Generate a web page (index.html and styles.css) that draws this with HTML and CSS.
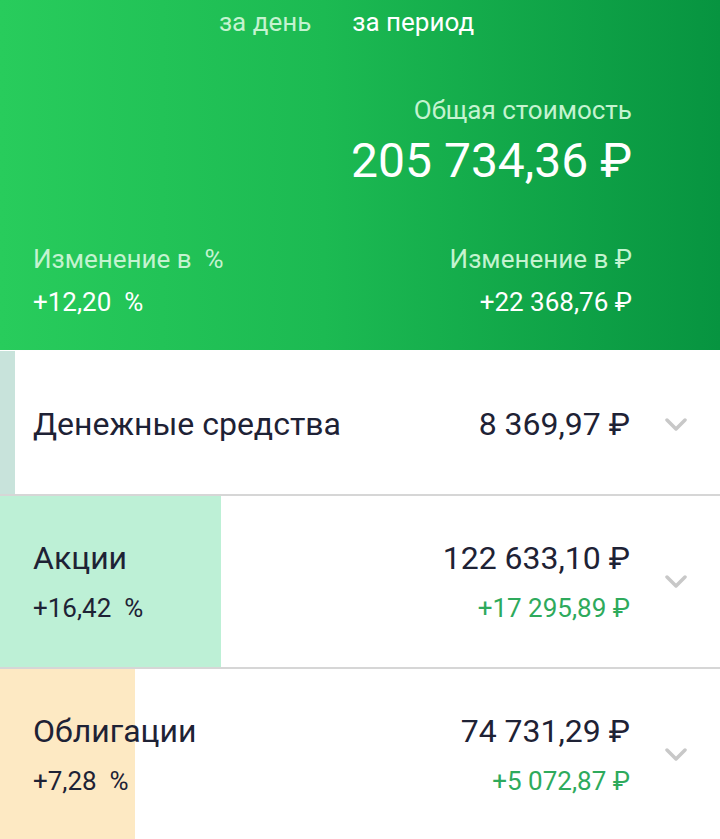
FILE: index.html
```html
<!DOCTYPE html>
<html lang="ru">
<head>
    <meta charset="UTF-8">
    <meta name="viewport" content="width=device-width, initial-scale=1.0">
    <title>Портфель</title>
    <link rel="stylesheet" href="styles.css">
</head>
<body>
    <!-- Шапка с общей стоимостью -->
    <div class="header">
        <div class="tabs">
            <span class="tab">за день</span>
            <span class="tab active">за период</span>
        </div>
        <div class="total">
            <div class="label">Общая стоимость</div>
            <div class="total-value">205 734,36 ₽</div>
        </div>
        <div class="changes">
            <div class="change">
                <div class="label">Изменение в&nbsp; %</div>
                <div class="change-value">+12,20&nbsp; %</div>
            </div>
            <div class="change right">
                <div class="label">Изменение в ₽</div>
                <div class="change-value">+22 368,76 ₽</div>
            </div>
        </div>
    </div>

    <!-- Состав портфеля -->
    <div class="assets">
        <div class="asset cash" style="--w: 15px">
            <div class="asset-left">
                <div class="asset-name">Денежные средства</div>
            </div>
            <div class="asset-right">
                <div class="asset-sum">8 369,97 ₽</div>
            </div>
            <svg class="chevron" width="22" height="13" viewBox="0 0 22 13"><polyline points="2,2 11,11 20,2" fill="none" stroke="#c8c8c8" stroke-width="3.5" stroke-linecap="round" stroke-linejoin="round"/></svg>
        </div>

        <div class="asset stocks" style="--w: 221px">
            <div class="asset-left">
                <div class="asset-name">Акции</div>
                <div class="asset-pct">+16,42&nbsp; %</div>
            </div>
            <div class="asset-right">
                <div class="asset-sum">122 633,10 ₽</div>
                <div class="asset-diff">+17 295,89 ₽</div>
            </div>
            <svg class="chevron" width="22" height="13" viewBox="0 0 22 13"><polyline points="2,2 11,11 20,2" fill="none" stroke="#c8c8c8" stroke-width="3.5" stroke-linecap="round" stroke-linejoin="round"/></svg>
        </div>

        <div class="asset bonds" style="--w: 135px">
            <div class="asset-left">
                <div class="asset-name">Облигации</div>
                <div class="asset-pct">+7,28&nbsp; %</div>
            </div>
            <div class="asset-right">
                <div class="asset-sum">74 731,29 ₽</div>
                <div class="asset-diff">+5 072,87 ₽</div>
            </div>
            <svg class="chevron" width="22" height="13" viewBox="0 0 22 13"><polyline points="2,2 11,11 20,2" fill="none" stroke="#c8c8c8" stroke-width="3.5" stroke-linecap="round" stroke-linejoin="round"/></svg>
        </div>
    </div>
</body>
</html>
```

FILE: styles.css
```css
body {
    margin: 0;
    font-family: Roboto, "Noto Sans", "DejaVu Sans", sans-serif;
    background-color: #ffffff;
    color: #1e2235;
}
.header {
    height: 350px;
    box-sizing: border-box;
    padding: 6px 88px 0 33px;
    background: linear-gradient(90deg, #28cc5c 0%, #1cba52 45%, #079440 100%);
    color: #ffffff;
}
.tabs {
    display: flex;
    justify-content: center;
    gap: 41px;
    padding-left: 28px;
    font-size: 26px;
    line-height: 32px;
}
.tab {
    color: #c4f3d0;
}
.tab.active {
    color: #ffffff;
}
.label {
    color: #c4f3d0;
    font-size: 26px;
    line-height: 32px;
}
.total {
    text-align: right;
    margin-top: 56px;
}
.total-value {
    margin-top: 7px;
    font-size: 48px;
    line-height: 56px;
}
.changes {
    display: flex;
    justify-content: space-between;
    margin-top: 54px;
}
.change.right {
    text-align: right;
}
.change-value {
    margin-top: 11px;
    font-size: 26px;
    line-height: 32px;
}
.assets {
    background-color: #ffffff;
}
.asset {
    display: flex;
    align-items: center;
    padding: 0 33px;
    border-bottom: 2px solid #d6d6d6;
    background: linear-gradient(90deg, var(--fill) 0, var(--fill) var(--w), #ffffff var(--w));
}
.asset.cash {
    --fill: #c8e3db;
    height: 145px;
    padding-top: 3px;
    box-sizing: border-box;
    margin-top: 1px;
}
.asset.stocks {
    --fill: #bdf0d6;
    height: 171px;
}
.asset.bonds {
    --fill: #fde9c3;
    height: 171px;
    border-bottom: none;
}
.asset-left {
    flex: 1;
}
.asset-right {
    text-align: right;
}
.asset-name, .asset-sum {
    font-size: 32px;
    line-height: 38px;
}
.asset-pct, .asset-diff {
    margin-top: 15px;
    font-size: 26px;
    line-height: 32px;
}
.asset-diff {
    color: #2eaa5c;
}
.chevron {
    margin-left: 35px;
    flex-shrink: 0;
}
```
